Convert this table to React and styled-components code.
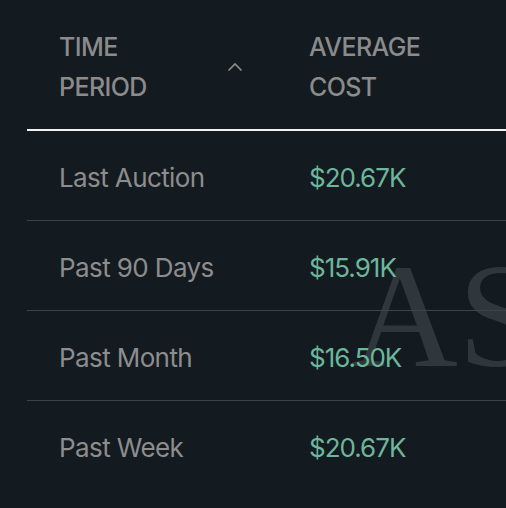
import React from 'react'
import styled, { createGlobalStyle } from 'styled-components'

const Global = createGlobalStyle`
    html, body {
        margin: 0;
        padding: 0;
        background: #131a20;
    }
    body {
        font-family: Inter, "Liberation Sans", sans-serif;
    }
`

const Page = styled.div`
    position: relative;
    width: 506px;
    height: 508px;
    overflow: hidden;
    background: #131a20;
`

const Table = styled.div`
    position: relative;
    z-index: 1;
    margin-left: 27px;
    width: 560px;
`

const HeadRow = styled.div`
    display: grid;
    grid-template-columns: 282px 1fr;
    border-bottom: 2px solid #f2f2f2;
`

const HeadCell = styled.div`
    display: flex;
    align-items: center;
    justify-content: space-between;
    padding: 27px 66px 22px 32px;
    font-size: 25px;
    font-weight: 500;
    line-height: 40px;
    letter-spacing: -0.6px;
    text-transform: uppercase;
    color: #8b8b8b;
    ${p => p.$second && 'padding-left: 0;'}
`

const Row = styled.div`
    display: grid;
    grid-template-columns: 282px 1fr;
    height: 89px;
    align-items: center;
    border-bottom: 1px solid ${p => p.$last ? 'transparent' : '#3a4350'};
`

const Cell = styled.div`
    padding-left: ${p => p.$value ? '0' : '32px'};
    padding-top: 3px;
    font-size: 26px;
    letter-spacing: ${p => p.$value ? '-1px' : '-0.6px'};
    color: ${p => p.$value ? '#6cb69b' : '#8d8d8d'};
`

const Mark = styled.div`
    position: absolute;
    left: 351px;
    top: 242px;
    font-family: "Liberation Serif", serif;
    font-size: 148px;
    line-height: 1;
    color: rgba(150, 160, 165, 0.22);
    pointer-events: none;
    white-space: nowrap;
`

const Caret = () => (
    <svg width="16" height="10" viewBox="0 0 16 10" fill="none">
        <path d="M1.5 8.5 L8 2 L14.5 8.5" stroke="#8b8b8b" strokeWidth="1.7" />
    </svg>
)

const rows = [
    ['Last Auction', '$20.67K'],
    ['Past 90 Days', '$15.91K'],
    ['Past Month', '$16.50K'],
    ['Past Week', '$20.67K'],
]

export default function App() {
    return (
        <Page>
            <Global />
            <Mark>AS</Mark>
            <Table>
                <HeadRow>
                    <HeadCell>
                        <span>Time<br />Period</span>
                        <Caret />
                    </HeadCell>
                    <HeadCell $second>
                        <span>Average<br />Cost</span>
                    </HeadCell>
                </HeadRow>
                {rows.map((r, i) => (
                    <Row key={r[0]} $last={i === rows.length - 1}>
                        <Cell>{r[0]}</Cell>
                        <Cell $value>{r[1]}</Cell>
                    </Row>
                ))}
            </Table>
        </Page>
    )
}
